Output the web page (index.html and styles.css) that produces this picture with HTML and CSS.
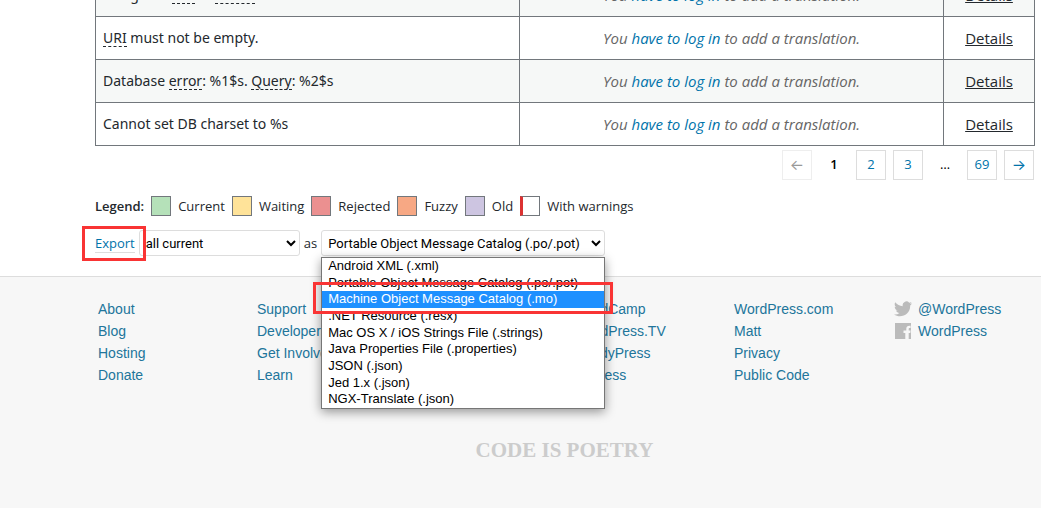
FILE: index.html
```html
<!DOCTYPE html>
<html lang="en">
<head>
    <meta charset="UTF-8">
    <meta name="viewport" content="width=device-width, initial-scale=1.0">
    <title>Translations</title>
    <link rel="stylesheet" href="styles.css">
</head>
<body>
    <main class="content">
        <table class="translations">
            <colgroup>
                <col class="col-original">
                <col class="col-translation">
                <col class="col-actions">
            </colgroup>
            <tbody>
                <tr>
                    <td>Bring into <span class="glossary">site</span> in <span class="glossary">status</span></td>
                    <td class="missing">You <a href="#">have to log in</a> to add a translation.</td>
                    <td class="actions"><a href="#">Details</a></td>
                </tr>
                <tr>
                    <td><span class="glossary">URI</span> must not be empty.</td>
                    <td class="missing">You <a href="#">have to log in</a> to add a translation.</td>
                    <td class="actions"><a href="#">Details</a></td>
                </tr>
                <tr>
                    <td>Database <span class="glossary">error</span>: %1$s. <span class="glossary">Query</span>: %2$s</td>
                    <td class="missing">You <a href="#">have to log in</a> to add a translation.</td>
                    <td class="actions"><a href="#">Details</a></td>
                </tr>
                <tr>
                    <td>Cannot set DB charset to %s</td>
                    <td class="missing">You <a href="#">have to log in</a> to add a translation.</td>
                    <td class="actions"><a href="#">Details</a></td>
                </tr>
            </tbody>
        </table>

        <nav class="paging" aria-label="Pages">
            <span class="page arrow disabled">←</span>
            <span class="page current">1</span>
            <a class="page" href="#">2</a>
            <a class="page" href="#">3</a>
            <span class="page dots">…</span>
            <a class="page" href="#">69</a>
            <a class="page arrow" href="#">→</a>
        </nav>

        <div class="legend">
            <strong>Legend:</strong>
            <span class="box status-current"></span><span class="name">Current</span>
            <span class="box status-waiting"></span><span class="name">Waiting</span>
            <span class="box status-rejected"></span><span class="name">Rejected</span>
            <span class="box status-fuzzy"></span><span class="name">Fuzzy</span>
            <span class="box status-old"></span><span class="name">Old</span>
            <span class="box has-warnings"></span><span class="name">With warnings</span>
        </div>

        <form class="export">
            <a class="export-link" href="#">Export</a>
            <select class="what" aria-label="Export filter">
                <option>all current</option>
                <option>only matching the filter</option>
            </select>
            <label for="export-format">as</label>
            <div class="format">
                <select id="export-format">
                    <option>Portable Object Message Catalog (.po/.pot)</option>
                </select>
                <ul class="options">
                    <li>Android XML (.xml)</li>
                    <li>Portable Object Message Catalog (.po/.pot)</li>
                    <li class="selected">Machine Object Message Catalog (.mo)</li>
                    <li>.NET Resource (.resx)</li>
                    <li>Mac OS X / iOS Strings File (.strings)</li>
                    <li>Java Properties File (.properties)</li>
                    <li>JSON (.json)</li>
                    <li>Jed 1.x (.json)</li>
                    <li>NGX-Translate (.json)</li>
                </ul>
                <div class="mark mark-option"></div>
            </div>
            <div class="mark mark-export"></div>
        </form>
    </main>

    <footer class="footer">
        <div class="footer-links">
            <ul>
                <li><a href="#">About</a></li>
                <li><a href="#">Blog</a></li>
                <li><a href="#">Hosting</a></li>
                <li><a href="#">Donate</a></li>
            </ul>
            <ul>
                <li><a href="#">Support</a></li>
                <li><a href="#">Developers</a></li>
                <li><a href="#">Get Involved</a></li>
                <li><a href="#">Learn</a></li>
            </ul>
            <ul class="projects">
                <li><a href="#">WordCamp</a></li>
                <li><a href="#">WordPress.TV</a></li>
                <li><a href="#">BuddyPress</a></li>
                <li><a href="#">bbPress</a></li>
            </ul>
            <ul>
                <li><a href="#">WordPress.com</a></li>
                <li><a href="#">Matt</a></li>
                <li><a href="#">Privacy</a></li>
                <li><a href="#">Public Code</a></li>
            </ul>
            <ul class="social">
                <li>
                    <svg class="icon" viewBox="0 0 18 16" aria-hidden="true"><path d="M18 2.300c-.7.300-1.400.500-2.100.600.800-.500 1.300-1.200 1.600-2-.700.400-1.500.700-2.300.900A3.700 3.700 0 0 0 8.800 5.200C5.700 5 3 3.500 1.200 1.300c-1 1.700-.5 3.900 1.200 4.900-.6 0-1.200-.2-1.700-.5 0 1.800 1.300 3.300 3 3.700-.6.100-1.100.1-1.700 0 .5 1.500 1.900 2.500 3.500 2.600A7.400 7.400 0 0 1 0 13.500C6.800 18 16.200 13.600 16.200 5c0-.300 0-.200 0-.500.700-.6 1.300-1.300 1.800-2.200z"/></svg>
                    <a href="#">@WordPress</a>
                </li>
                <li>
                    <svg class="icon" viewBox="0 0 18 16" aria-hidden="true"><path d="M1 0h16v16h-2.300V9.900h1.600l.3-2.300h-1.900V6c0-.7.200-1.100 1.100-1.100h.8V2.700c-2.800-.3-4.300.4-4.300 3v1.900H9.500v2.300h1.800V16H1z"/></svg>
                    <a href="#">WordPress</a>
                </li>
            </ul>
        </div>
        <p class="poetry">Code is Poetry</p>
    </footer>
</body>
</html>
```
FILE: styles.css
```css
* {
    box-sizing: border-box;
}

html {
    background: #f7f7f7;
}

body {
    margin: 0;
    overflow: hidden;
    font-family: "Open Sans", sans-serif;
    font-size: 13px;
    color: #23282d;
}

a {
    color: #0073aa;
    text-decoration: none;
}

ul {
    list-style: none;
    margin: 0;
    padding: 0;
}

.content {
    padding: 0 6px 20px 95px;
    background: #fff;
    border-bottom: 1px solid #ddd;
}

/* the first row is scrolled halfway out */
.translations {
    width: 100%;
    margin-top: -27px;
    border-collapse: collapse;
    table-layout: fixed;
    font-family: "Noto Sans", sans-serif;
    font-size: 14px;
}

.col-actions {
    width: 91px;
}

.translations td {
    height: 43px;
    padding: 0 7px;
    border: 1px solid #72777c;
    line-height: 20px;
}

.translations tr:nth-child(odd) {
    background: #f6f8f7;
}

.glossary {
    display: inline-block;
    border-bottom: 1px dashed #23282d;
    line-height: 17px;
}

.translations .missing,
.translations .actions {
    text-align: center;
    font-family: "Open Sans", sans-serif;
    font-size: 15px;
}

.translations .missing {
    font-style: italic;
    color: #666;
}

.actions a {
    color: #23282d;
    text-decoration: underline;
}

.paging {
    display: flex;
    justify-content: flex-end;
    gap: 7px;
    margin: 4px 1px 0 0;
}

.page {
    min-width: 30px;
    height: 30px;
    padding: 0 6px;
    border: 1px solid #ddd;
    line-height: 27px;
    text-align: center;
}

.arrow {
    padding: 0;
    font-family: Inter, sans-serif;
    font-size: 15px;
}

.current,
.dots {
    border-color: transparent;
    color: #000;
}

.current {
    font-weight: 600;
}

.disabled {
    border-color: #eee;
    color: #999;
}

.legend {
    display: flex;
    align-items: center;
    margin-top: 16px;
    line-height: 20px;
}

.legend strong {
    font-weight: 600;
}

.box {
    width: 20px;
    height: 20px;
    margin: 0 7px;
    border: 1px solid #72777c;
}

.status-current {
    background: #b5e1b9;
}

.status-waiting {
    background: #ffe399;
}

.status-rejected {
    background: #eb9090;
}

.status-fuzzy {
    background: #f7a884;
}

.status-old {
    background: #cdc5e1;
}

.has-warnings {
    border-left: 3px solid #dc3232;
}

.export {
    position: relative;
    display: flex;
    align-items: center;
    gap: 4px;
    margin-top: 14px;
}

.export-link {
    border-bottom: 1px solid #ddd;
    line-height: 18px;
}

.export select {
    display: block;
    height: 26px;
    padding: 0 0 0 2px;
    border: 1px solid #ddd;
    border-radius: 3px;
    background: #fff;
    font-family: Roboto, sans-serif;
    font-size: 13px;
    color: #000;
}

.export .what {
    width: 161px;
}

.export .format select {
    width: 284px;
}

.format {
    position: relative;
}

.options {
    position: absolute;
    top: 100%;
    left: 0;
    z-index: 1;
    display: grid;
    grid-auto-rows: 1fr;
    width: 284px;
    height: 152px;
    margin-top: 1px;
    border: 1px solid #767676;
    background: #fff;
    box-shadow: 0 3px 10px rgba(0, 0, 0, 0.4);
    font-family: "Liberation Sans", Arial, sans-serif;
    font-size: 13px;
    line-height: 16px;
    color: #000;
}

.options li {
    padding: 0 6px;
}

.options .selected {
    background: #1e90ff;
    color: #fff;
}

.mark {
    position: absolute;
    z-index: 2;
    border: 3px solid #f93434;
}

.mark-export {
    top: -4px;
    left: -13px;
    width: 64px;
    height: 35px;
}

.mark-option {
    top: 52px;
    left: -8px;
    width: 300px;
    height: 32px;
}

.footer {
    padding: 21px 10px 48px 98px;
    font-family: "Liberation Sans", Arial, sans-serif;
    font-size: 14px;
    line-height: 22px;
}

.footer-links {
    display: grid;
    grid-template-columns: repeat(5, 159px) 1fr;
}

.footer a {
    color: #21759b;
}

.projects {
    grid-column: 4;
}

.social {
    padding-left: 1px;
}

.social li {
    display: flex;
    align-items: center;
    gap: 6px;
}

.icon {
    width: 18px;
    height: 16px;
    fill: #bbb;
}

.poetry {
    margin: 53px 0 0;
    font-family: "Liberation Serif", serif;
    font-size: 21px;
    font-weight: bold;
    text-transform: uppercase;
    text-align: center;
    color: #ccc;
}
```
